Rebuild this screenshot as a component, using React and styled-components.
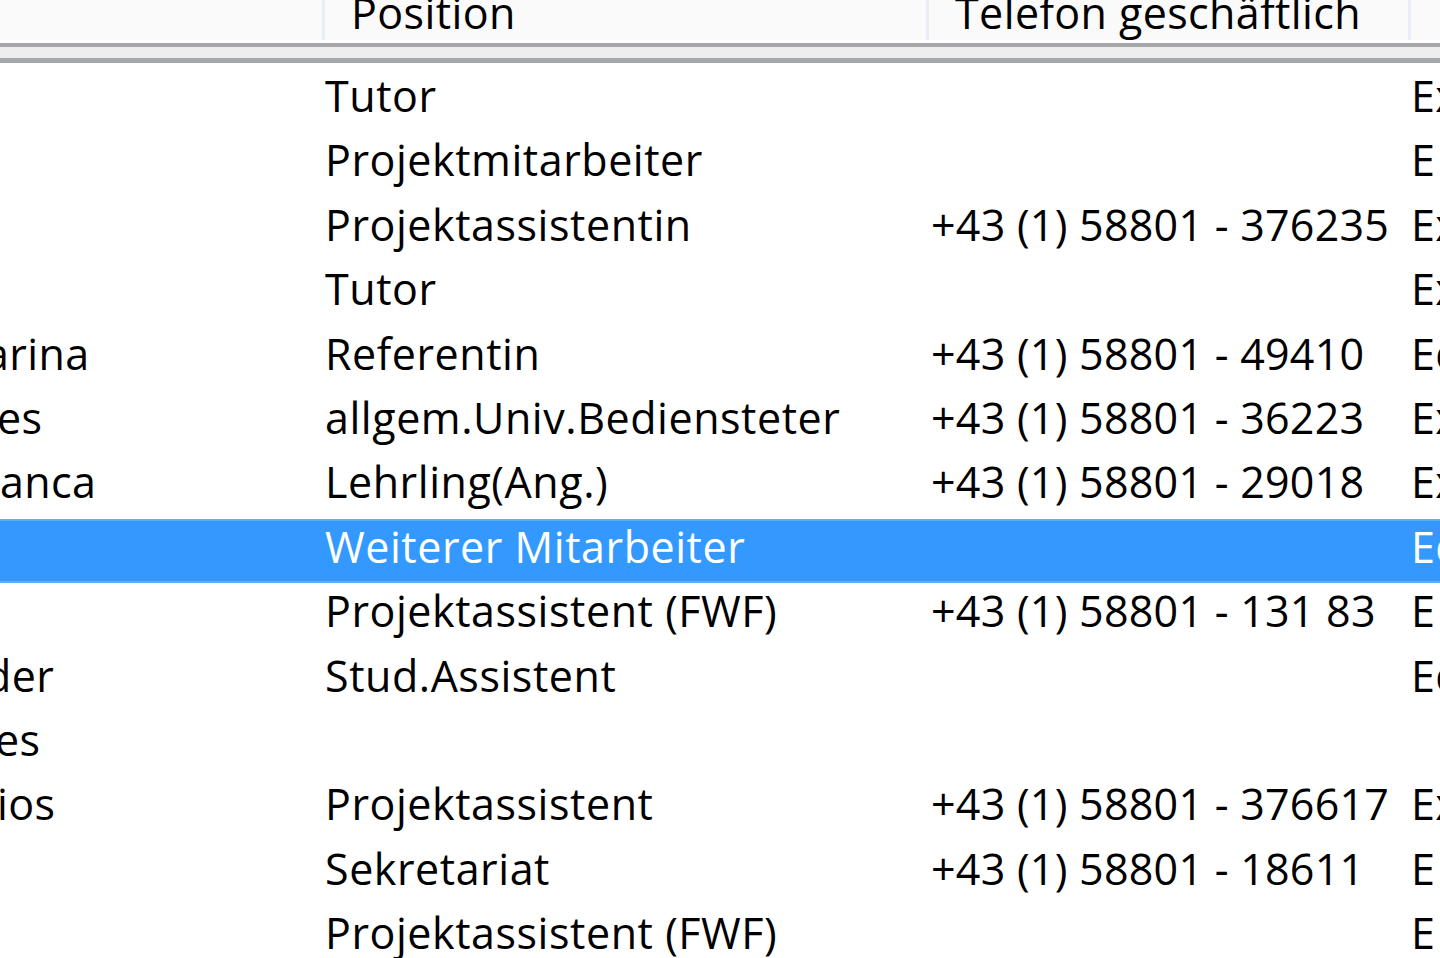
import React from "react"
import styled, { createGlobalStyle } from "styled-components"

const GlobalStyle = createGlobalStyle`
    html, body {
        margin: 0;
        padding: 0;
        background: #ffffff;
        overflow: hidden;
    }
    body {
        font-family: "Open Sans", "Noto Sans", "DejaVu Sans", sans-serif;
        color: #000000;
    }
`

const COLUMNS = "322px 604px 482px 420px"

const Viewport = styled.div`
    width: 1440px;
    height: 958px;
    overflow: hidden;
    background: #ffffff;
`

const Sheet = styled.div`
    width: 1828px;
    display: flex;
    flex-direction: column;
`

const HeaderRow = styled.div`
    display: grid;
    grid-template-columns: ${COLUMNS};
    height: 40px;
    background: #fafafa;
`

const HeaderCell = styled.div`
    box-sizing: border-box;
    height: 40px;
    padding-left: ${({ first }) => (first ? "0" : "26px")};
    border-left: ${({ first }) => (first ? "none" : "3px solid #e9eef6")};
    overflow: hidden;
    white-space: nowrap;
`

const HeaderLabel = styled.div`
    font-size: 43px;
    line-height: 40px;
    letter-spacing: 0.4px;
    margin-top: -7px;
`

const Divider = styled.div`
    box-sizing: border-box;
    margin-top: 3px;
    height: 20px;
    border-top: 4px solid #a5a7aa;
    border-bottom: 5px solid #a5a7aa;
    background: #eeeeee;
`

const Body = styled.div`
    padding-top: 5px;
    display: flex;
    flex-direction: column;
`

const Row = styled.div`
    display: grid;
    grid-template-columns: ${COLUMNS};
    box-sizing: border-box;
    height: 64.4px;
    flex-shrink: 0;
    background: ${({ selected }) => (selected ? "#3399ff" : "transparent")};
    box-shadow: ${({ selected }) => (selected ? "inset 0 2px 0 #5eacff, inset 0 -2px 0 #5eacff" : "none")};
    color: ${({ selected }) => (selected ? "#ffffff" : "#000000")};
`

const Cell = styled.div`
    font-size: 43px;
    line-height: 56px;
    letter-spacing: ${({ spacing }) => spacing ?? 0.4}px;
    white-space: nowrap;
    overflow: hidden;
    padding-left: ${({ pad }) => pad}px;
`

const NameText = styled.span`
    display: inline-block;
`

const rows = [
    { name: "", indent: 0, pos: "Tutor", tel: "", last: "Extern" },
    { name: "", indent: 0, pos: "Projektmitarbeiter", tel: "", last: "E" },
    { name: "", indent: 0, pos: "Projektassistentin", tel: "+43 (1) 58801 - 376235", last: "Extern" },
    { name: "", indent: 0, pos: "Tutor", tel: "", last: "Extern" },
    { name: "arina", indent: -15, pos: "Referentin", tel: "+43 (1) 58801 - 49410", last: "Edv" },
    { name: "es", indent: -3, pos: "allgem.Univ.Bediensteter", tel: "+43 (1) 58801 - 36223", last: "Extern" },
    { name: "anca", indent: 0, pos: "Lehrling(Ang.)", tel: "+43 (1) 58801 - 29018", last: "Extern" },
    { name: "", indent: 0, pos: "Weiterer Mitarbeiter", tel: "", last: "Edv", selected: true },
    { name: "", indent: 0, pos: "Projektassistent (FWF)", tel: "+43 (1) 58801 - 131 83", last: "E" },
    { name: "der", indent: -15, pos: "Stud.Assistent", tel: "", last: "Edv" },
    { name: "es", indent: -5, pos: "", tel: "", last: "" },
    { name: "ios", indent: -3, pos: "Projektassistent", tel: "+43 (1) 58801 - 376617", last: "Extern" },
    { name: "", indent: 0, pos: "Sekretariat", tel: "+43 (1) 58801 - 18611", last: "E" },
    { name: "", indent: 0, pos: "Projektassistent (FWF)", tel: "", last: "E" },
]

export default function App() {
    return (
        <Viewport>
            <GlobalStyle />
            <Sheet>
                <HeaderRow>
                    <HeaderCell first />
                    <HeaderCell><HeaderLabel>Position</HeaderLabel></HeaderCell>
                    <HeaderCell><HeaderLabel>Telefon geschäftlich</HeaderLabel></HeaderCell>
                    <HeaderCell><HeaderLabel>E-Mail</HeaderLabel></HeaderCell>
                </HeaderRow>
                <Divider />
                <Body>
                    {rows.map((r, i) => (
                        <Row key={i} selected={r.selected}>
                            <Cell pad={0}>
                                <NameText style={{ marginLeft: r.indent }}>{r.name}</NameText>
                            </Cell>
                            <Cell pad={3} spacing={0.55}>{r.pos}</Cell>
                            <Cell pad={5} spacing={0.25}>{r.tel}</Cell>
                            <Cell pad={3}>{r.last}</Cell>
                        </Row>
                    ))}
                </Body>
            </Sheet>
        </Viewport>
    )
}
